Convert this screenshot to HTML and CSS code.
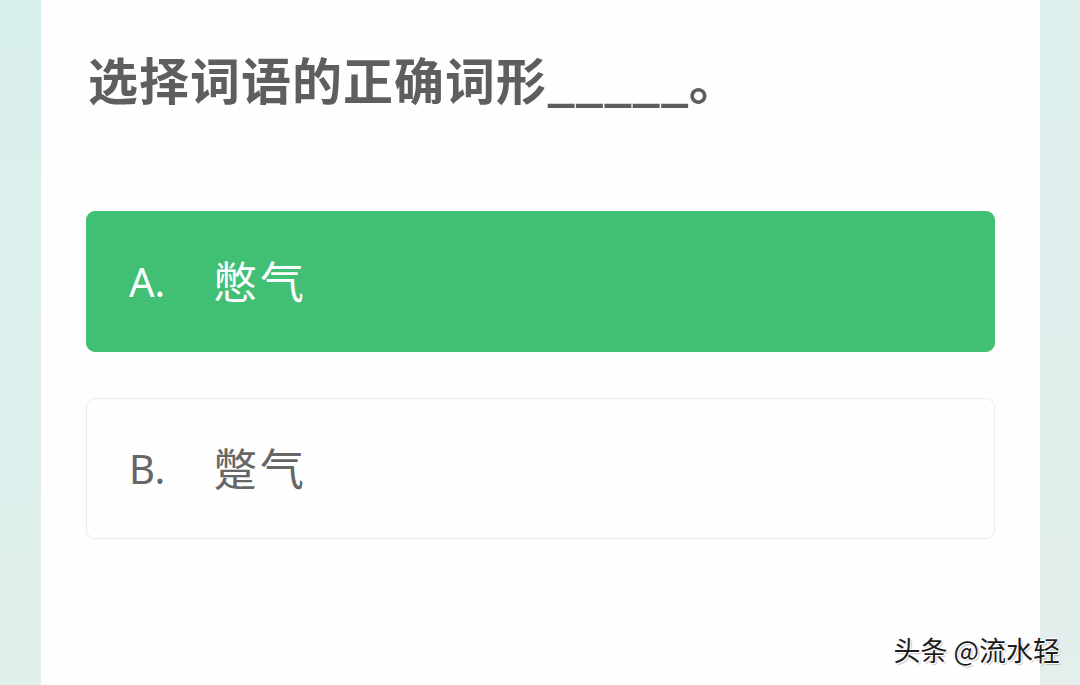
FILE: index.html
```html
<!DOCTYPE html>
<html lang="zh-CN">
<head>
  <meta charset="UTF-8">
  <meta name="viewport" content="width=device-width, initial-scale=1.0">
  <title>选择题</title>
  <link rel="stylesheet" href="styles.css">
</head>
<body>
  <div class="page">
    <div class="side side-left"></div>

    <div class="panel">
      <h1 class="question">选择词语的正确词形<span class="blank">_____</span>。</h1>

      <div class="options">
        <div class="option selected">
          <span class="letter">A.</span>
          <span class="word">憋气</span>
        </div>
        <div class="option">
          <span class="letter">B.</span>
          <span class="word">蹩气</span>
        </div>
      </div>
    </div>

    <div class="side side-right"></div>

    <!-- 水印 -->
    <div class="watermark">头条 @流水轻</div>
  </div>
</body>
</html>
```

FILE: styles.css
```css
html, body {
  margin: 0;
  height: 100%;
}
body {
  font-family: "Noto Sans CJK SC", "Noto Sans", sans-serif;
  background-color: #fff;
  overflow: hidden;
}
.page {
  position: relative;
  display: flex;
  height: 685px;
}
.side {
  flex: none;
}
.side-left {
  width: 41px;
  background: linear-gradient(180deg, #d9efeb 0%, #dfefec 100%);
}
.side-right {
  width: 40px;
  background: linear-gradient(180deg, #dcefec 0%, #e4eeec 100%);
}
.panel {
  flex: 1;
  background-color: #fefefe;
  padding: 0 45px;
}
.question {
  margin: 45px 0 0 2px;
  font-size: 50px;
  line-height: 66px;
  font-weight: 700;
  color: #5e5e5e;
  letter-spacing: 1px;
  white-space: nowrap;
}
.blank {
  letter-spacing: 0;
}
.options {
  display: flex;
  flex-direction: column;
  gap: 46px;
  margin-top: 100px;
}
.option {
  display: flex;
  align-items: center;
  height: 139px;
  padding-left: 42px;
  border: 1px solid #ececec;
  border-radius: 9px;
  background-color: #fefefe;
  color: #666;
  font-size: 44px;
}
.option.selected {
  background-color: #41bf74;
  border-color: #41bf74;
  color: #fbfefc;
}
.letter {
  font-family: "Noto Sans", "Roboto", sans-serif;
  font-size: 40px;
  width: 84px;
}
.word {
  letter-spacing: 3px;
  margin-top: -3px;
}
.watermark {
  position: absolute;
  right: 20px;
  bottom: 18px;
  font-size: 27px;
  line-height: 34px;
  color: #1d1d1d;
  text-shadow: 1px 1px 0 #fff, -1px -1px 0 #fff, 2px 2px 1px rgba(0, 0, 0, 0.2);
}
```
